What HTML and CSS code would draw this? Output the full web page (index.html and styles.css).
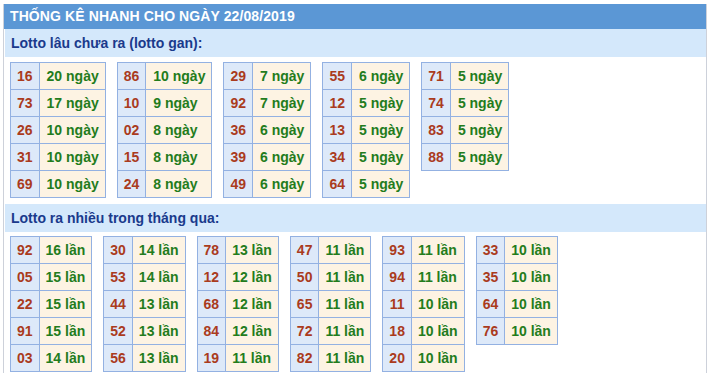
FILE: index.html
```html
<!DOCTYPE html>
<html lang="vi">
<head>
<meta charset="utf-8">
<title>Thống kê nhanh</title>
<link rel="stylesheet" href="styles.css">
</head>
<body>
<div class="box">
  <div class="title">THỐNG KÊ NHANH CHO NGÀY 22/08/2019</div>
  <div class="sub">Lotto lâu chưa ra (lotto gan):</div>
  <div class="tables sec1">
    <table class="t"><tr><td class="n">16</td><td class="v">20 ngày</td></tr><tr><td class="n">73</td><td class="v">17 ngày</td></tr><tr><td class="n">26</td><td class="v">10 ngày</td></tr><tr><td class="n">31</td><td class="v">10 ngày</td></tr><tr><td class="n">69</td><td class="v">10 ngày</td></tr></table>
    <table class="t"><tr><td class="n">86</td><td class="v">10 ngày</td></tr><tr><td class="n">10</td><td class="v">9 ngày</td></tr><tr><td class="n">02</td><td class="v">8 ngày</td></tr><tr><td class="n">15</td><td class="v">8 ngày</td></tr><tr><td class="n">24</td><td class="v">8 ngày</td></tr></table>
    <table class="t"><tr><td class="n">29</td><td class="v">7 ngày</td></tr><tr><td class="n">92</td><td class="v">7 ngày</td></tr><tr><td class="n">36</td><td class="v">6 ngày</td></tr><tr><td class="n">39</td><td class="v">6 ngày</td></tr><tr><td class="n">49</td><td class="v">6 ngày</td></tr></table>
    <table class="t"><tr><td class="n">55</td><td class="v">6 ngày</td></tr><tr><td class="n">12</td><td class="v">5 ngày</td></tr><tr><td class="n">13</td><td class="v">5 ngày</td></tr><tr><td class="n">34</td><td class="v">5 ngày</td></tr><tr><td class="n">64</td><td class="v">5 ngày</td></tr></table>
    <table class="t"><tr><td class="n">71</td><td class="v">5 ngày</td></tr><tr><td class="n">74</td><td class="v">5 ngày</td></tr><tr><td class="n">83</td><td class="v">5 ngày</td></tr><tr><td class="n">88</td><td class="v">5 ngày</td></tr></table>
  </div>
  <div class="sub">Lotto ra nhiều trong tháng qua:</div>
  <div class="tables sec2">
    <table class="t"><tr><td class="n">92</td><td class="v">16 lần</td></tr><tr><td class="n">05</td><td class="v">15 lần</td></tr><tr><td class="n">22</td><td class="v">15 lần</td></tr><tr><td class="n">91</td><td class="v">15 lần</td></tr><tr><td class="n">03</td><td class="v">14 lần</td></tr></table>
    <table class="t"><tr><td class="n">30</td><td class="v">14 lần</td></tr><tr><td class="n">53</td><td class="v">14 lần</td></tr><tr><td class="n">44</td><td class="v">13 lần</td></tr><tr><td class="n">52</td><td class="v">13 lần</td></tr><tr><td class="n">56</td><td class="v">13 lần</td></tr></table>
    <table class="t"><tr><td class="n">78</td><td class="v">13 lần</td></tr><tr><td class="n">12</td><td class="v">12 lần</td></tr><tr><td class="n">68</td><td class="v">12 lần</td></tr><tr><td class="n">84</td><td class="v">12 lần</td></tr><tr><td class="n">19</td><td class="v">11 lần</td></tr></table>
    <table class="t"><tr><td class="n">47</td><td class="v">11 lần</td></tr><tr><td class="n">50</td><td class="v">11 lần</td></tr><tr><td class="n">65</td><td class="v">11 lần</td></tr><tr><td class="n">72</td><td class="v">11 lần</td></tr><tr><td class="n">82</td><td class="v">11 lần</td></tr></table>
    <table class="t"><tr><td class="n">93</td><td class="v">11 lần</td></tr><tr><td class="n">94</td><td class="v">11 lần</td></tr><tr><td class="n">11</td><td class="v">10 lần</td></tr><tr><td class="n">18</td><td class="v">10 lần</td></tr><tr><td class="n">20</td><td class="v">10 lần</td></tr></table>
    <table class="t"><tr><td class="n">33</td><td class="v">10 lần</td></tr><tr><td class="n">35</td><td class="v">10 lần</td></tr><tr><td class="n">64</td><td class="v">10 lần</td></tr><tr><td class="n">76</td><td class="v">10 lần</td></tr></table>
  </div>
</div>
</body>
</html>
```
FILE: styles.css
```css
html, body {
  margin: 0;
  padding: 0;
  background: #ffffff;
}
body {
  font-family: "Liberation Sans", Arial, sans-serif;
}
.box {
  margin: 4px 2px 0 3px;
  width: 702px;
  border-left: 1px solid #cdd1da;
  border-right: 1px solid #cdd1da;
}
.title {
  background: #5b97d5;
  color: #ffffff;
  font-weight: bold;
  font-size: 14px;
  height: 25px;
  line-height: 25px;
  padding-left: 6px;
  letter-spacing: 0.1px;
}
.sub {
  background: #d4e8fb;
  color: #1a3a8c;
  font-weight: bold;
  font-size: 14px;
  height: 28px;
  line-height: 28px;
  padding-left: 6px;
  margin-left: 1px;
}
.tables {
  display: flex;
  align-items: flex-start;
  gap: 11px;
  padding: 5px 0 6px 6px;
}
.sec2 {
  padding-top: 4px;
}
.t {
  border-collapse: collapse;
  font-size: 14px;
  font-weight: bold;
}
.t td {
  border: 1px solid #93b1e2;
  height: 27px;
  padding: 0;
  line-height: 16px;
  box-sizing: border-box;
}
.t .n {
  background: #dde9f9;
  color: #aa3b1d;
  padding: 0 6px;
  text-align: center;
}
.t .v {
  background: #fdf3e3;
  color: #237c1c;
}
.sec1 .v {
  padding: 0 6px 0 7px;
}
.sec2 .v {
  padding: 0 6px;
}
```
